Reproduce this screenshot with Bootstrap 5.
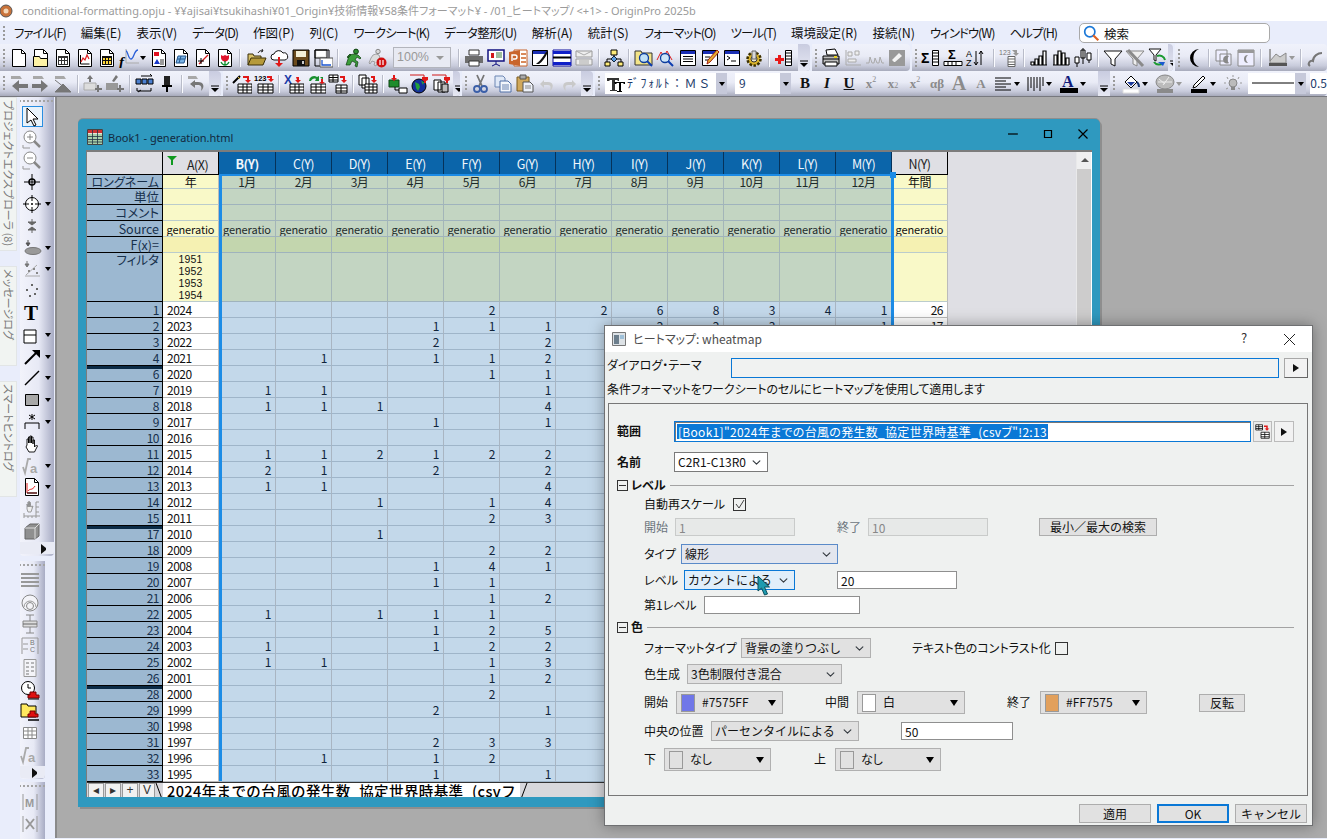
<!DOCTYPE html>
<html lang="ja">
<head>
<meta charset="UTF-8">
<meta name="viewport" content="width=device-width, initial-scale=1">
<title>OriginPro 2025b</title>
<link rel="stylesheet" href="https://cdn.jsdelivr.net/npm/bootstrap@5.3.0/dist/css/bootstrap.min.css">
<style>
html,body{height:100%;overflow:hidden}
body{position:relative;width:1327px;height:839px;background:#e9edfb;font:12px/1.2 "Noto Sans CJK JP","Liberation Sans",sans-serif;font-feature-settings:"palt";color:#111}
svg{display:block;flex:none}
/* title + menu */
.appt{height:21px;background:#fff;color:#9b9b9b;font:11px/21px "Noto Sans","Noto Sans CJK JP",sans-serif;font-feature-settings:"palt";white-space:nowrap}
.appt svg{margin:3px 9px 0 0}
.menub{height:23px;padding-left:2px}
.menub .mi{margin-right:15px;font-size:12.5px;white-space:nowrap}
.menub .mk{letter-spacing:-1px}
.menub .mh{letter-spacing:-.6px}
.gp{width:4px;align-self:stretch;margin:4px 0;background:radial-gradient(circle,#9a9a9a 1px,transparent 1.2px) 0 0/4px 4px repeat-y;flex:none}
.srch{position:absolute;left:1079px;top:23px;width:191px;height:20px;background:#fff;border:1px solid #a9a9a9;border-radius:5px;font-size:12.5px;padding-left:3px}
/* toolbars */
.tbrow{height:27px;gap:2px}
.tbrow2{height:26px;border-bottom:1px solid #77787e}
.tbar{height:100%;padding-left:2px;background:linear-gradient(#f0f2fb 0,#e9ebf6 45%,#c9ccdc 80%,#a7aabb 100%);border-radius:0 4px 4px 0;overflow:hidden;flex:none}
.tb{width:22px;height:20px;flex:none;display:flex;align-items:center;justify-content:center}
.dr{width:8px;height:20px;flex:none;display:flex;align-items:center}
.dr::after{content:"";border:3px solid transparent;border-top:4px solid #000;border-bottom:0}
.dg::after{border-top-color:#999}
.sp{width:8px;height:20px;flex:none;position:relative}
.sp::after{content:"";position:absolute;left:3px;top:1px;bottom:1px;border-left:1px solid #b9bcc9;border-right:1px solid #fafbff}
.x2{width:2px;flex:none}.x3{width:3px;flex:none}.x4{width:4px;flex:none}.x6{width:6px;flex:none}
.hd{width:12px;align-self:stretch;flex:none;background:linear-gradient(#c9cce0,#e6e8f3);display:flex;align-items:flex-end;justify-content:center;padding-bottom:3px;margin-left:auto}
.hd svg{width:8px;height:8px}
.zoomc{width:58px;height:21px;background:#e8eaf3;border:1px solid #b3b5bd;color:#999;font:12.5px/19px "Liberation Sans",sans-serif;padding-left:3px;margin:0 4px 0 2px;flex:none}
.zoomc::after{content:"";float:right;margin:8px 6px 0 0;border:4px solid transparent;border-top:4px solid #999;border-bottom:0}
.fcb{height:21px;background:#fff;flex:none;display:flex;align-items:center;font-size:12px;color:#223a6a;white-space:nowrap}
.fnm{letter-spacing:1.6px;font-feature-settings:normal}
.ddb{width:11px;height:21px;background:#c6c9da;display:flex;align-items:center;justify-content:center;flex:none;margin-left:auto}
.ddb::after{content:"";border:3px solid transparent;border-top:4px solid #000;border-bottom:0}
.ft{width:22px;height:20px;flex:none;display:flex;align-items:center;justify-content:center;font:bold 15px "Liberation Serif",serif;color:#111}
.ft.gy{color:#8b8b8b;font-size:13px}
.ft sup,.ft sub{font-size:8px;font-weight:400}
.tb-w1{width:810px}.tb-w2{width:98px}.tb-w3{width:261px}.tb-w4{flex:1}
.tb-w5{width:221px}.tb-w6{width:237px}.tb-w7{width:131px}.tb-w8{flex:1}
.fc1{width:122px}.fc2{width:56px}.fc3{width:58px}
/* dock */
.dock{width:55px;height:741px;flex:none}
.stabs{width:18px;flex:none}
.stab{width:17px;background:#f1f4f2;border:1px solid #e2e5e6;border-left:0;color:#7a7a7a;font-size:11px;writing-mode:vertical-rl;text-orientation:sideways;white-space:nowrap;padding-top:2px;line-height:15px;overflow:hidden}
.st1{height:154px}.st2{height:100px;margin-top:15px}.st3{height:116px;margin-top:15px}
.vbars{margin-left:2px}
.vbar{background:linear-gradient(90deg,#f2f3fb,#e7e9f5 55%,#a8acc4);border-radius:0 0 4px 4px;overflow:hidden}
.vb1{width:34px;height:459px}.vb2{width:25px;height:218px;margin-top:5px}.vb3{width:25px;height:60px;margin-top:3px}
.vgrip{height:9px;background:radial-gradient(circle,#a4a4a4 1px,transparent 1.2px) 2px 2px/4px 4px repeat-x}
.vi{height:21.8px;display:flex;align-items:center;padding-left:2px}
.vbar .vi svg{width:20px;height:20px}
.vb2 .vi,.vb3 .vi{padding-left:0}
.vi .dr{margin-left:3px;width:8px}
.vsel{width:21px;height:21px;border:1px solid #2a8ee0;background:#e9f3fb}
.vexp{height:12px;display:flex;justify-content:flex-end;padding-right:8px;background:#e9ebf5}
.vexp::after{content:"";border:4px solid transparent;border-left:5px solid #111;border-right:0;margin-top:2px}
/* mdi */
.mdi{width:1272px;height:741px;background:#ababab;border-left:2px solid #8a8a8a;flex:none;position:relative}
.wswin{position:absolute;left:21px;top:22px;width:1022px;height:688px;background:#2f99bf;border-radius:5px 5px 0 0;box-shadow:2px 2px 0 #8e8e8e,0 -1px 0 #8e8e8e}
.wstit{height:31px;padding:5px 8px 0 9px;color:#13293e;font:11px/1 "Noto Sans",sans-serif}
.wstit svg.bk{margin-right:5px}
.wc{position:absolute;top:8px;width:20px;height:14px}
.wc1{left:925px}.wc2{left:960px}.wc3{left:995px}
.wsin{margin:0 8px;width:1006px;height:647px;background:#dfdfe4;border-top:2px solid #7c7c7c;border-left:1px solid #7c7c7c;position:relative;overflow:hidden}
table.sht{border-collapse:separate;border-spacing:0;table-layout:fixed;width:861px;font-size:12px;letter-spacing:-.5px;line-height:13px}
.sht td,.sht th{padding:0 2px;overflow:hidden;white-space:nowrap;font-weight:400;border-right:1px solid #a9b5c2;border-bottom:1px solid #9fb5c9;height:16px}
.sht .c0{width:76px}.sht .c1{width:56px}.sht .c2{width:57px}.sht .cn{width:56px}
.sht thead th{height:23px;text-align:center;background:#0b65aa;color:#f1f6fb;border-right:1px solid #06325a;border-bottom:1px solid #000;font-size:12.5px}
.sht thead th.hg{background:#dfdfe4;color:#222;border-right:1px solid #000}
.sht thead th.hb{font-weight:700}
.sht .rh{background:#9cb8d1;color:#17304c;text-align:right;padding-right:3px;border-right:1px solid #000;border-bottom:1px solid #000;overflow:visible}
.sht .lb{font-size:12.5px;letter-spacing:0}
.sht .aa{background:#fff;border-right:1px solid #bbb;border-bottom:1px solid #bbb;padding-left:4px}
.sht .yy{background:#c3d8ea;text-align:right;padding-right:4px;color:#10243a}
.sht .nn{background:#fff;border-right:1px solid #bbb;border-bottom:1px solid #bbb;text-align:right;padding-right:4px}
.sht .ly{background:#f9f9c8;text-align:center;border-right:1px solid #bbb;border-bottom:1px solid #bcc;padding:0 1px}
.sht .lg{background:#c3d5c2;text-align:center;border-right:1px solid #a3b5b8;border-bottom:1px solid #9fb3bd;color:#1d2a2a;padding:0 1px}
.sht .fy{background:#f5f1b2}.sht .fg{background:#c3d6ae}
.sht .r14 td{height:14px;font-size:12px;line-height:13px;overflow:visible}
.sht .r48 td{height:48px;vertical-align:top}
.sht .ftr{display:block;font:10.5px/12px "Liberation Sans",sans-serif;letter-spacing:.2px}
.sht .hid .rh{box-shadow:inset 0 3px 0 #0a2a45}
.sgen{font-size:11px;letter-spacing:-.1px}
.fnl{gap:10px;margin-left:-6px}
.selv{position:absolute;background:#1c8ce6;z-index:2}
.sv1{left:132px;top:23px;width:3px;height:606px}
.sv2{left:804px;top:23px;width:3px;height:606px}
.sv3{left:132px;top:22px;width:675px;height:2px}
.sv4{left:803px;top:20px;width:6px;height:6px}
.vsb{position:absolute;left:989px;top:0;width:17px;height:100%;background:#cdcccc;border-left:1px solid #e9e9ea;border-right:2px solid #fff}
.vsb i{display:block;height:17px;background:#efeff0;position:relative}
.vsb i::after{content:"";position:absolute;left:4px;top:6px;border:4px solid transparent;border-bottom:4px solid #555;border-top:0}
.tabs{position:absolute;left:0;top:630px;width:989px;height:17px;background:#d8d8dc;border-top:1px solid #333}
.tnav{width:68px;height:16px;gap:1px;flex:none;padding-left:1px}
.tnav span{width:16px;height:15px;background:#f1f1f1;border:1px solid #9a9a9a;font:12px/13px "Liberation Sans",sans-serif;text-align:center;color:#333;flex:none}
.tname{height:16px;background:#fff;font-size:14.5px;font-weight:500;letter-spacing:.4px;line-height:16px;color:#000;white-space:nowrap;padding:0 4px;font-feature-settings:normal}
/* dialog */
.dlg{position:absolute;left:604px;top:325px;width:709px;height:501px;background:#eff1f0;border:1px solid #6f7072;box-shadow:0 0 14px rgba(0,0,0,.35);z-index:5}
.dlgt{height:26px;background:#fff;padding-left:7px;color:#4d4d4d;font-size:12px}
.dlgt svg.di{margin-right:7px}
.dlgt .q{position:absolute;left:636px;top:4px;font-size:13px;color:#333}
.dlgt .cl{position:absolute;left:678px;top:7px}
.thm{margin-top:6px;height:20px;padding-left:2px}
.thm .lbt{width:124px;margin-top:-5px}
.thmi{width:548px;height:20px;background:#f0f2f1;border:1px solid #0a78d6}
.sbtn{width:24px;height:20px;margin-left:5px;background:#f2f2f2;border:1px solid #a8a8a8;border-bottom-color:#666;border-right-color:#666;display:flex;align-items:center;justify-content:center;flex:none}
.sbtn::after{content:"";border:4px solid transparent;border-left:6px solid #111;border-right:0}
.dsc{margin:2px 0 0 2px;height:17px;line-height:17px;letter-spacing:-.12px}
.grp{margin:6px 0 0 3px;width:700px;height:393px;border:1px solid #777;padding:17px 13px 0 8px}
.grp .form-control,.grp .form-select,.fakei{border-radius:0;font-size:12px;line-height:1.2;min-height:0;padding:0 3px;color:#111;box-shadow:none}
.grp .form-control{height:18px;background:#fff;border:1px solid #8f8f8f}
.grp .form-control:disabled{background:#e7e9e8;border-color:#c9cbca;color:#888;opacity:1}
.grp .form-select{height:20px;background-color:#e1e1e1;border:1px solid #b0b0b0;background-size:11px 9px;background-position:right 5px center;padding-right:18px}
.grp .fw{background-color:#fff;border-color:#7a7a7a}
.grp .fsel{background-color:#e3e6ee;border-color:#5a8ac8}
.grp .fhov{background-color:#e0eefa;border-color:#0a78d6}
.fakei{height:21px;background:#fff;border:1px solid #0a78d6;flex:none;width:577px;display:flex;align-items:center;padding-left:2px;box-shadow:inset 1px 1px 0 #777;white-space:nowrap;overflow:hidden}
.hl{background:#0a78d6;color:#fff;padding:0 1px;line-height:15px;letter-spacing:.3px}
.sm19{width:19px;height:21px;margin-left:2px;background:#ececec;border:1px solid #bbb;display:flex;align-items:center;justify-content:center;flex:none}
.sbtn.sm20{width:20px;height:21px;margin-left:2px;border-color:#bbb}
.r{display:flex;align-items:center;flex:none}
.ind{margin-left:27px}
.b7{font-weight:700}
.sect{height:18px;font-weight:700}
.sect .mn{width:11px;height:11px;border:1px solid #333;margin-right:3px;position:relative;flex:none}
.sect .mn::after{content:"";position:absolute;left:1px;right:1px;top:4px;border-top:1px solid #333}
.sect hr{flex:1;margin:0 0 0 4px;border:0;border-top:1px solid #a3a3a3;opacity:1}
.cb13{width:13px;height:13px;border:1px solid #333;background:#eff1f0;flex:none;display:flex}
.btnw{border-radius:0;font-size:12px;line-height:1;padding:0;background:#e1e1e1;border:1px solid #adadad;color:#111;flex:none}
.cd{height:23px;background:#e1e1e1;border:1px solid #b0b0b0;display:flex;align-items:center;padding:0 6px 0 4px;gap:7px;flex:none;font-size:12px}
.cd::after{content:"";margin-left:auto;border:4.5px solid transparent;border-top:6px solid #000;border-bottom:0}
.chip{width:14px;height:18px;border:1px solid #999;flex:none;background:#e1e1e1}
.chip.chip1{background:#7077e8}.chip.chip2{background:#fff}.chip.chip3{background:#e2a05c}
.h18{height:18px}.h20{height:20px}.h21{height:21px}.h23{height:23px}
.m1{margin-top:1px}.m2{margin-top:2px}.m4{margin-top:4px}.m5{margin-top:5px}.m6{margin-top:6px}.m7{margin-top:7px}.m8{margin-top:8px}.m10{margin-top:10px}
.w20{width:20px}.w21{width:21px}.w31{width:31px}.w32{width:32px}.w33{width:33px}.w37{width:37px}.w40{width:40px}.w43{width:43px}.w57{width:57px}.w60{width:60px}.w67{width:67px}.w89{width:89px}.w97{width:97px}.w143{width:143px}
.s94{width:94px}.s157{width:157px}.s111{width:111px}.s130{width:130px}.s155{width:155px}.s148{width:148px}
.i120{width:120px}.i156{width:156px}.i112{width:112px}
.c106{width:106px}.c107{width:107px}.c108{width:108px}
.g41{margin-left:41px}.g42{margin-left:42px}.g43{margin-left:43px}.g51{margin-left:51px}.g52{margin-left:52px}
.b118{width:118px;height:18px}.b46{width:46px;height:18px}
.foot{margin-top:8px;gap:6px;padding-right:5px}
.fb{width:72px;height:19px;border-radius:0;font-size:12px;line-height:1;padding:0;background:#e1e1e1;border:1px solid #adadad;color:#111}
.fb.pri{border:2px solid #0a78d6}
.curs{position:absolute;left:152px;top:249px;z-index:6}
</style>
</head>
<body>
<svg width="0" height="0" class="position-absolute">
<defs>
<symbol id="d" viewBox="0 0 20 20"><path d="M3.5 1.5h9l4 4v13h-13z" fill="#fff" stroke="#000"/><path d="M12.5 1.5v4h4" fill="none" stroke="#000"/></symbol>
<symbol id="new" viewBox="0 0 20 20"><use href="#d"/></symbol>
<symbol id="fold" viewBox="0 0 20 20"><use href="#d"/><path d="M2.5 8.500h6l1 2h7v8h-14z" fill="#fdf2a5" stroke="#000"/></symbol>
<symbol id="wks" viewBox="0 0 20 20"><use href="#d"/><path d="M5 8h10v9H5z" fill="#333"/><path d="M6 10h2v2H6zm3 0h2v2H9zm3 0h2v2h-2zM6 13h2v3H6zm3 0h2v3H9zm3 0h2v3h-2z" fill="#fff"/></symbol>
<symbol id="gph" viewBox="0 0 20 20"><use href="#d"/><path d="M5.500 7v9h9" fill="none" stroke="#000"/><path d="M6 14l2-4 2 2 2-5 2 4" fill="none" stroke="#e02020" stroke-width="1.200"/></symbol>
<symbol id="mtx" viewBox="0 0 20 20"><use href="#d"/><path d="M5 8h10v9H5z" fill="#111"/><path d="M6 10h2v2H6zm3 0h2v2H9zm3 0h2v2h-2zM6 13h2v3H6zm3 0h2v3H9zm3 0h2v3h-2z" fill="#ffd83a"/></symbol>
<symbol id="fx" viewBox="0 0 20 20"><path d="M7 15V1M7 15h13" fill="none" stroke="#aaa"/><path d="M7 3c2 0 2 8 5 8s3-9 7-9" fill="none" stroke="#2a5fd8" stroke-width="1.300"/><text x="0" y="19" font-family="Liberation Serif" font-style="italic" font-weight="700" font-size="15">f</text></symbol>
<symbol id="rep" viewBox="0 0 20 20"><use href="#d"/><path d="M5 4h5v4H5z" fill="#e01020"/><path d="M5 16l3-5 3 5z" fill="#1636c8"/><path d="M11 12h4M11 14h4M11 16h4" stroke="#333"/></symbol>
<symbol id="nte" viewBox="0 0 20 20"><use href="#d"/><path d="M7 8h8l-2 7H5z" fill="#79b3e6" stroke="#25568c"/><path d="M6 11h8M10 8l-2 7" stroke="#25568c"/></symbol>
<symbol id="lay" viewBox="0 0 20 20"><use href="#d"/><path d="M6 16L15 7" stroke="#d01818" stroke-width="1.300"/><path d="M8 10v6M5 13h6" stroke="#000"/></symbol>
<symbol id="tul" viewBox="0 0 20 20"><use href="#d"/><path d="M6 7l2 1 2-1 2 1 2-1v3c0 2-2 3-4 4-2-1-4-2-4-4z" fill="#e0142c"/><path d="M10 13v4M6 14c1 2 2 3 4 3 2 0 3-1 4-3" fill="none" stroke="#109030" stroke-width="1.300"/></symbol>
<symbol id="open" viewBox="0 0 20 20"><path d="M1 17V6h5l1 2h7v2" fill="#d8c168" stroke="#3a2f08"/><path d="M1 17l3-7h15l-3 7z" fill="#b69a3a" stroke="#3a2f08"/><path d="M11 5c1-2 3-3 5-2l-1-2m1 2l-2 1" fill="none" stroke="#222"/></symbol>
<symbol id="cld" viewBox="0 0 20 20"><path d="M5 12a3 3 0 010-6 5 5 0 019-1 3.500 3.500 0 012 7z" fill="#fff" stroke="#111"/><path d="M9 9h2v6h3l-4 4-4-4h3z" fill="#e01818"/></symbol>
<symbol id="sav" viewBox="0 0 20 20"><path d="M2 2h16v16H2z" fill="#6b4a1c" stroke="#000"/><path d="M5 3h10v6H5z" fill="#f4efd6"/><path d="M6 12h8v6H6z" fill="#111"/><path d="M11 13h2v3h-2z" fill="#ccc"/></symbol>
<symbol id="sva" viewBox="0 0 20 20"><path d="M2 2h12v8H2z" fill="#eee" stroke="#000"/><path d="M2 2h14v16H2z" fill="none" stroke="#000"/><path d="M4 3h8v5H4z" fill="#fff"/><path d="M7 10h13v9H7z" fill="#fff" stroke="#555"/><path d="M9 12v5h9" fill="none" stroke="#1b55d0" stroke-width="1.300"/></symbol>
<symbol id="run" viewBox="0 0 20 20"><circle cx="13" cy="3.500" r="2.400" fill="#2f8f30" stroke="#103f10"/><path d="M11 6l4 1 3 3-1 1-3-2-2 3 3 2-1 5-2-1 1-3-4-2-2 4H3l2-6 1-4zM4 9l3-3 1 1-3 3z" fill="#3b9d3a" stroke="#103f10" stroke-width=".7"/></symbol>
<symbol id="stp" viewBox="0 0 20 20"><circle cx="11" cy="3.500" r="2.200" fill="#d8d8d8" stroke="#888"/><path d="M9 6l3 1 1 3-3 2 1 2-2 4-2-1 1-3-3-1-2 3-1-1 2-5 2-3z" fill="#ddd" stroke="#888" stroke-width=".7"/><circle cx="14.500" cy="14.500" r="5" fill="#d01010"/><path d="M13 12v5M16 12v5" stroke="#fff" stroke-width="1.200"/></symbol>
<symbol id="prng" viewBox="0 0 20 20"><path d="M5 2h10v5H5z" fill="#fff" stroke="#333"/><path d="M1 8h18v7H1z" fill="#6d6d6d"/><path d="M5 13h10v5H5z" fill="#fff" stroke="#333"/></symbol>
<symbol id="sld" viewBox="0 0 20 20"><path d="M2 2h16v11H2z" fill="#fff" stroke="#101080" stroke-width="1.500"/><path d="M5 5h3v5H5z" fill="#d01818"/><path d="M10 5h6M10 7h6M10 9h6" stroke="#3a7a3a"/><path d="M10 13v3M6 18l4-2 4 2" fill="none" stroke="#101080"/></symbol>
<symbol id="ppt" viewBox="0 0 20 20"><path d="M6 2h13v16H6z" fill="#fff" stroke="#c7622a"/><path d="M1 4l11-2v16L1 16z" fill="#c9652c"/><path d="M13 5h5v2h-5zm0 4h5v2h-5zm0 4h5v2h-5z" fill="#d98a5c"/><path d="M4 13V7h3a2 2 0 010 4H5" fill="none" stroke="#fff" stroke-width="1.400"/></symbol>
<symbol id="pen" viewBox="0 0 20 20"><path d="M2.500 2.500h15v15h-15z" fill="#fff" stroke="#000"/><path d="M3 3h14v3H3z" fill="#1b2fb4"/><path d="M6 16c3-2 7-7 10-12l2-2-1 4c-2 4-5 8-8 10z" fill="#111"/></symbol>
<symbol id="bars" viewBox="0 0 20 20"><path d="M1 2h18v16H1z" fill="#fff" stroke="#0c0c9c"/><path d="M1 3h18v3H1zm0 11h18v3H1z" fill="#1020c8"/><path d="M1 9.500h18" stroke="#000" stroke-width="2"/></symbol>
<symbol id="env" viewBox="0 0 20 20"><path d="M2 3h16v6H2zM2 11h16v6H2z" fill="#eee" stroke="#999"/><path d="M2 3l8 4 8-4M5 13h10M5 15h10" fill="none" stroke="#aaa"/></symbol>
<symbol id="tree" viewBox="0 0 20 20"><path d="M10 7v4M3 14v-3h14v3" fill="none" stroke="#000"/><path d="M7 2h6v5H7zM1 14h5v4H1zM14 14h5v4h-5z" fill="#ffec7a" stroke="#000"/><path d="M10 8l3 3-3 3-3-3z" fill="#5a9be0" stroke="#123"/></symbol>
<symbol id="qfl" viewBox="0 0 20 20"><path d="M1 15V3h6l1 2h10v12H1z" fill="#f3e489" stroke="#333"/><circle cx="10" cy="10" r="4.500" fill="#bfe0f7" stroke="#0c3c9c" stroke-width="1.300"/><path d="M13 13l5 5" stroke="#0c3cb0" stroke-width="2"/></symbol>
<symbol id="qgr" viewBox="0 0 20 20"><path d="M1 12l4-8 3 5 3-6 5 9" fill="none" stroke="#e02020"/><circle cx="9" cy="10" r="4.500" fill="#cfe6f8" stroke="#0c3c9c" stroke-width="1.300"/><path d="M12 13l5 5" stroke="#0c3cb0" stroke-width="2"/></symbol>
<symbol id="tbl" viewBox="0 0 20 20"><path d="M2.500 2.500h15v15h-15z" fill="#fff" stroke="#000"/><path d="M3 3h14v3H3z" fill="#1b2fb4"/><path d="M5 8.500h10M5 11h10M5 13.500h10" stroke="#000"/></symbol>
<symbol id="edt" viewBox="0 0 20 20"><path d="M2.500 2.500h15v15h-15z" fill="#fff" stroke="#000"/><path d="M3 3h14v3H3z" fill="#1b2fb4"/><path d="M5 9h5M5 12h4" stroke="#000"/><path d="M7 16l1-4 9-10 2 2-9 10z" fill="#e8b030" stroke="#a02010"/></symbol>
<symbol id="cmd" viewBox="0 0 20 20"><path d="M2.500 2.500h15v15h-15z" fill="#fff" stroke="#000"/><path d="M3 3h14v3H3z" fill="#1b2fb4"/><path d="M5 8l3 2-3 2M9 13h5" fill="none" stroke="#000"/></symbol>
<symbol id="gear" viewBox="0 0 20 20"><circle cx="10" cy="11" r="6.500" fill="#d9b32c" stroke="#3c3000" stroke-width="2.500" stroke-dasharray="2.500 1.500"/><circle cx="10" cy="11" r="3" fill="#efe9cf" stroke="#333"/><path d="M8 3h4v8H8z" fill="#d9d9d9" stroke="#666"/></symbol>
<symbol id="plus" viewBox="0 0 20 20"><path d="M11.500 2.500h6v15h-6z" fill="#fff" stroke="#000"/><path d="M12 5h5M12 8h5M12 11h5M12 14h5" stroke="#000"/><path d="M4 7h3v3h3v3H7v3H4v-3H1v-3h3z" fill="#e81818"/></symbol>
<symbol id="prt" viewBox="0 0 20 20"><path d="M5 2l9-1 3 6H6z" fill="#fff" stroke="#000"/><path d="M2 8h16v8H2z" fill="#bdbdbd" stroke="#000"/><path d="M2 11h16" stroke="#000"/><path d="M4 14h12v4H4z" fill="#fff" stroke="#000"/><path d="M13 9h3" stroke="#e8d020" stroke-width="2"/></symbol>
<symbol id="cols" viewBox="0 0 20 20"><path d="M3 2v15h15" fill="none" stroke="#aaa"/><path d="M5 4h4v4H5zM12 3h4v4h-4zM5 11h8v3H5z" fill="#eee" stroke="#aaa"/></symbol>
<symbol id="pks" viewBox="0 0 20 20"><path d="M1 15h3l1-6 2 6h2l1-5 2 5h2l1-6 2 6h2" fill="none" stroke="#aaa"/></symbol>
<symbol id="ers" viewBox="0 0 20 20"><path d="M2 2h16v16H2z" fill="#999"/><path d="M7 14l-2-2 7-7 3 3-7 6z" fill="#f4f4f4"/></symbol>
<symbol id="sgl" viewBox="0 0 20 20"><text x="0" y="15" font-family="Liberation Sans" font-weight="700" font-size="14">Σ</text><path d="M11.500 2.500h6v15h-6z" fill="#fff" stroke="#000"/><path d="M12 5h5M12 8h5M12 11h5M12 14h5" stroke="#000"/></symbol>
<symbol id="sum" viewBox="0 0 20 20"><text x="5" y="11" font-family="Liberation Sans" font-weight="700" font-size="13">Σ</text><path d="M1 13.500h18v4H1z" fill="#fff" stroke="#000"/><path d="M5 13v4M9 13v4M13 13v4" stroke="#000"/></symbol>
<symbol id="srt" viewBox="0 0 20 20"><text x="1" y="9" font-family="Liberation Sans" font-size="9">A</text><text x="1" y="18" font-family="Liberation Sans" font-size="9">Z</text><path d="M11 3v14m-2-3l2 3 2-3M16 17V3m-2 3l2-3 2 3" fill="none" stroke="#000"/></symbol>
<symbol id="n12" viewBox="0 0 20 20"><text x="0" y="7" font-family="Liberation Sans" font-size="7" fill="#777">123</text><path d="M9 8.500h7v10H9z" fill="#fff" stroke="#666"/><path d="M9 11h7M9 14h7M9 16.500h7" stroke="#666"/><path d="M13 2h5v3h2l-3 3-3-3h2" fill="#999"/></symbol>
<symbol id="b1" viewBox="0 0 20 20"><path d="M2 17h16M2 17v-3h3v3M6 17v-6h3v6M10 17V8h3v9M14 17V3h3v14" fill="#fff" stroke="#000" stroke-width="1.200"/></symbol>
<symbol id="b2" viewBox="0 0 20 20"><path d="M2 17h16M3 17V7h3v10M7 17V3h3v14M11 17V5h3v12M15 17v-7h3v7" fill="#fff" stroke="#000" stroke-width="1.200"/></symbol>
<symbol id="b3" viewBox="0 0 20 20"><path d="M2 9h4v6H2zM8 2h4v8H8zM14 5h4v7h-4z" fill="#fff" stroke="#000"/><path d="M4 15v4M10 0v16M16 12v3" stroke="#000"/></symbol>
<symbol id="flt" viewBox="0 0 20 20"><path d="M1 3h18l-7 8v7l-4-2v-5z" fill="#fff" stroke="#111"/></symbol>
<symbol id="fltx" viewBox="0 0 20 20"><path d="M1 3h18l-7 8v7l-4-2v-5z" fill="#eee" stroke="#888"/><path d="M3 2l15 16" stroke="#8a8a8a" stroke-width="3"/></symbol>
<symbol id="flr" viewBox="0 0 20 20"><path d="M2 1h12l-5 6v6l-2-1V7z" fill="#fff" stroke="#111"/><path d="M7 14a6 6 0 009 1m2-3a6 6 0 00-8-4" fill="none" stroke="#1a9a30" stroke-width="2"/><path d="M11 14l5 4 2-4z" fill="#1a5ad0"/></symbol>
<symbol id="moon" viewBox="0 0 20 20"><path d="M15 1a9 9 0 100 18 10 10 0 010-18z" fill="#000"/></symbol>
<symbol id="cm1" viewBox="0 0 20 20"><path d="M2 2h11v11H2zM6 6h11v11H6z" fill="#eef" stroke="#888"/><path d="M15 8a4 4 0 100 7 5 5 0 010-7z" fill="#888"/></symbol>
<symbol id="cm2" viewBox="0 0 20 20"><path d="M2 2h16v16H2z" fill="#eef" stroke="#888"/><path d="M2 2h16v3H2z" fill="#999"/><path d="M12 7a4 4 0 100 8 5 5 0 010-8z" fill="#888"/></symbol>
<symbol id="hil" viewBox="0 0 20 20"><path d="M2 1v14h16V5L12 9 8 6l-6 7z" fill="#ccc" stroke="#888"/><path d="M1 15h18v3H1z" fill="#555"/></symbol>
<symbol id="lst" viewBox="0 0 20 20"><path d="M4 18c-3-2 0-6 3-5 0-5 5-8 9-8" fill="none" stroke="#777" stroke-width="2"/></symbol>
<symbol id="bk" viewBox="0 0 20 20"><path d="M2 2h9l2 3H2z" fill="#a8a8a8"/><path d="M10 6L3 12l7 6v-4h9v-4h-9z" fill="#777"/></symbol>
<symbol id="fw" viewBox="0 0 20 20"><path d="M2 2h9l2 3H2z" fill="#a8a8a8"/><path d="M10 6l7 6-7 6v-4H1v-4h9z" fill="#777"/></symbol>
<symbol id="up" viewBox="0 0 20 20"><path d="M2 2h9l2 3H2z" fill="#a8a8a8"/><path d="M2 6l15 12M10 10l8 8H2z" fill="#777" stroke="#777"/></symbol>
<symbol id="fa" viewBox="0 0 20 20"><path d="M7 1l3 4H8v3H6V5H4z" fill="#777"/><path d="M1 9h12v7H1z" fill="#ddd" stroke="#aaa"/><path d="M15 11v7M12 15h7" stroke="#777" stroke-width="2"/></symbol>
<symbol id="fb" viewBox="0 0 20 20"><path d="M11 1L7 7l2 1 4-5z" fill="#777"/><path d="M1 9h12v7H1z" fill="#999"/><path d="M15 11v7M12 15h7" stroke="#777" stroke-width="2"/></symbol>
<symbol id="lnk" viewBox="0 0 20 20"><path d="M1 5h5v5H1zM7 5h5v5H7zM13 5h5v5h-5z" fill="#4b7fd0" stroke="#000"/><path d="M2 14v3h14v-3M6 2h11l-2-2m-9 16l-3 2" fill="none" stroke="#000"/></symbol>
<symbol id="pin" viewBox="0 0 20 20"><path d="M7 2h6v10H7z" fill="#222"/><path d="M5 12h10" stroke="#000" stroke-width="2"/><path d="M10 12v6" stroke="#000" stroke-width="2"/></symbol>
<symbol id="und" viewBox="0 0 20 20"><path d="M1 2h8l2 3H1z" fill="#a8a8a8"/><path d="M8 6L3 10l5 4v-3h3c3 0 4 2 3 6 4-4 3-9-3-9H8z" fill="#777"/></symbol>
<symbol id="wnd" viewBox="0 0 20 20"><path d="M1 9l7-7" stroke="#000" stroke-width="2"/><path d="M6 3l2 2" stroke="#e8c030"/><path d="M6 10h14v9H6z" fill="#fff" stroke="#000"/><path d="M6 13h14M6 16h14M11 10v9M15 10v9" stroke="#000"/><path d="M11 2h6v4h2l-3 3-3-3h2V4h-4z" fill="#e01818"/></symbol>
<symbol id="n1t" viewBox="0 0 20 20"><text x="0" y="7" font-family="Liberation Sans" font-weight="700" font-size="7.500">123</text><path d="M4 10h15v9H4z" fill="#fff" stroke="#000"/><path d="M4 13h15M4 16h15M9 10v9M14 10v9" stroke="#000"/><path d="M13 2h5v3h2l-3 3-3-3h2V4h-3z" fill="#e01818"/></symbol>
<symbol id="xls" viewBox="0 0 20 20"><text x="0" y="10" font-family="Liberation Sans" font-weight="700" font-size="12" fill="#1b3aa8">X</text><path d="M6 10h14v9H6z" fill="#fff" stroke="#000"/><path d="M6 13h14M6 16h14M11 10v9M15 10v9" stroke="#000"/><path d="M12 3h3v3h2l-3 3-3-3h2z" fill="#e01818"/></symbol>
<symbol id="rec" viewBox="0 0 20 20"><path d="M3 7a5 5 0 018-4l2-1v5H9l1-2c-2-1-4 0-5 2zM14 3h3v3" fill="#1a9030"/><path d="M5 10h15v9H5z" fill="#fff" stroke="#000"/><path d="M5 13h15M5 16h15M10 10v9M15 10v9" stroke="#000"/><path d="M15 5h2v3h2l-3 2-3-2h2z" fill="#e01818"/></symbol>
<symbol id="imt" viewBox="0 0 20 20"><path d="M1 1h9v7H1z" fill="#fff" stroke="#000"/><path d="M1 3.500h9M1 6h9M5 1v7" stroke="#000"/><path d="M8 11h11v8H8z" fill="#fff" stroke="#000"/><path d="M8 14h11M8 17h11M13 11v8" stroke="#000"/><path d="M12 2h5v4h2l-3 3-3-3h2V4h-3z" fill="#e01818"/></symbol>
<symbol id="cpy" viewBox="0 0 20 20"><path d="M1 1h7v10H1zM4 4h7v10H4z" fill="#fff" stroke="#000"/><path d="M7 10h12v9H7z" fill="#fff" stroke="#000"/><path d="M7 13h12M7 16h12M11 10v9M15 10v9" stroke="#000"/><path d="M13 2h4v4h2l-3 3-3-3h2V4h-2z" fill="#e01818"/></symbol>
<symbol id="plg" viewBox="0 0 20 20"><path d="M1 6h10v7H1z" fill="#1e8c2c" stroke="#0c4010"/><path d="M5 1h2v3h2L6 7 3 4h2z" fill="#e01818"/><path d="M11 14h8v5h-8z" fill="#fff" stroke="#000"/><path d="M7 13v3h4" fill="none" stroke="#000"/></symbol>
<symbol id="glb" viewBox="0 0 20 20"><circle cx="9" cy="12" r="7" fill="#15309c" stroke="#000"/><path d="M5 8l4 2 1 3-2 4-2-3zM11 7l3 1-1 3z" fill="#24a03a"/><path d="M0 1h14v3" fill="none" stroke="#d01818"/><path d="M12 3h6v3l-2 1v2h-2V7l-2-1z" fill="#e01818"/></symbol>
<symbol id="cpg" viewBox="0 0 20 20"><path d="M2 6h7v10H2zM6 8h7v10H6z" fill="#fff" stroke="#000"/><path d="M10 10h6v8h-6z" fill="#bbb" stroke="#000"/><path d="M0 1h14v3" fill="none" stroke="#d01818"/><path d="M12 3h6v3l-2 1v2h-2V7l-2-1z" fill="#e01818"/></symbol>
<symbol id="cut" viewBox="0 0 20 20"><path d="M6 1l5 11M13 1L8 12" stroke="#777" stroke-width="1.800"/><circle cx="6" cy="15" r="3" fill="none" stroke="#3b5fa8" stroke-width="1.800"/><circle cx="13" cy="15" r="3" fill="none" stroke="#3b5fa8" stroke-width="1.800"/></symbol>
<symbol id="cop" viewBox="0 0 20 20"><path d="M2 2h8l2 2v9H2z" fill="#dfe8f7" stroke="#6d86b3"/><path d="M7 7h8l3 3v8H7z" fill="#f3f6fc" stroke="#4e6fa5"/><path d="M9 11h7M9 13h7M9 15h7" stroke="#6d86b3"/></symbol>
<symbol id="pst" viewBox="0 0 20 20"><path d="M2 3h12v14H2z" fill="#d1a95c" stroke="#7a5a1e"/><path d="M5 1h6v4H5z" fill="#aaa" stroke="#555"/><path d="M8 8h7l3 3v7H8z" fill="#eef2fa" stroke="#555"/><path d="M10 12h6M10 14h6" stroke="#888"/></symbol>
<symbol id="ug" viewBox="0 0 20 20"><path d="M7 6L3 10l4 4v-3h4c3 0 3 3 2 6 4-3 4-9-2-9H7z" fill="#c9c9c9"/></symbol>
<symbol id="rg" viewBox="0 0 20 20"><path d="M13 6l4 4-4 4v-3H9c-3 0-3 3-2 6-4-3-4-9 2-9h4z" fill="#c9c9c9"/></symbol>
<symbol id="tt" viewBox="0 0 20 20"><path d="M1 4h12v3h-1l-1-1H9v10h2v1H4v-1h2V6H4L3 7H1z" fill="#333"/><path d="M8 8h11v2h-1l-1-1h-2v8h1v1h-5v-1h2V9h-2l-1 1H9z" fill="#000"/></symbol>
<symbol id="alg" viewBox="0 0 20 20"><path d="M2 4h16M2 7h11M2 10h16M2 13h11M2 16h16" stroke="#000"/></symbol>
<symbol id="bar4" viewBox="0 0 20 20"><path d="M3 3v14M6 3v11M9 3v14M12 3v11M15 3v14M18 3v9" stroke="#000"/></symbol>
<symbol id="acl" viewBox="0 0 20 20"><text x="3" y="13" font-family="Liberation Serif" font-weight="700" font-size="16" fill="#101c7c">A</text><path d="M1 14h18v5H1z" fill="#000"/></symbol>
<symbol id="fil" viewBox="0 0 20 20"><path d="M4 8l6-6 6 6-6 6z" fill="#fff" stroke="#000"/><path d="M6 8h8l-4 4z" fill="#1c3a9c"/><path d="M16 8c2 2 2 4 2 5" stroke="#12306e" stroke-width="2"/><path d="M2 15h16v4H2z" fill="#fff" stroke="#ddd"/></symbol>
<symbol id="pal" viewBox="0 0 20 20"><ellipse cx="10" cy="8" rx="9" ry="7" fill="#bbb" stroke="#888"/><path d="M4 5l6 5M14 3l-6 8M3 8h14" stroke="#eee"/><path d="M2 15h16v4H2z" fill="#8a8a8a"/></symbol>
<symbol id="pn2" viewBox="0 0 20 20"><path d="M5 11L14 2l2 2-9 9-3 1z" fill="#fff" stroke="#000"/><path d="M2 15h16v4H2z" fill="#000"/></symbol>
<symbol id="blb" viewBox="0 0 20 20"><circle cx="10" cy="9" r="4" fill="#bbb" stroke="#888"/><path d="M8 13h4v3H8z" fill="#888"/><path d="M10 1v2M3 9H1M19 9h-2M4 3l1 2M16 3l-1 2M3 15l2-1M17 15l-2-1" stroke="#999"/></symbol>
<symbol id="ptr" viewBox="0 0 20 20"><path d="M4 1v15l4-3 3 6 2-1-3-6h5z" fill="#fff" stroke="#000"/></symbol>
<symbol id="zin" viewBox="0 0 20 20"><circle cx="8" cy="8" r="6" fill="#fff" stroke="#888"/><path d="M5 8h6M8 5v6" stroke="#888"/><path d="M12 12l6 6" stroke="#888" stroke-width="2.500"/><path d="M1 16v3h7" fill="none" stroke="#999"/></symbol>
<symbol id="zou" viewBox="0 0 20 20"><circle cx="8" cy="8" r="6" fill="#fff" stroke="#888"/><path d="M5 8h6" stroke="#888"/><path d="M12 12l6 6" stroke="#888" stroke-width="2.500"/><path d="M1 16v3h7" fill="none" stroke="#999"/></symbol>
<symbol id="crs" viewBox="0 0 20 20"><path d="M10 2v16M2 10h16" stroke="#000"/><circle cx="10" cy="10" r="3" fill="none" stroke="#000" stroke-width="1.500"/></symbol>
<symbol id="tgt" viewBox="0 0 20 20"><circle cx="10" cy="10" r="6.500" fill="#fff" stroke="#000"/><path d="M10 1v6M10 13v6M1 10h6M13 10h6" stroke="#000"/><circle cx="10" cy="10" r="1" fill="#000"/></symbol>
<symbol id="mv1" viewBox="0 0 20 20"><path d="M10 3v3M10 14v3M6 6h8l-4 3zM6 14h8l-4-3z" fill="#666" stroke="#666"/></symbol>
<symbol id="ell" viewBox="0 0 20 20"><path d="M6 2v4M4 5h4L6 8z" fill="#555" stroke="#555"/><ellipse cx="11" cy="13" rx="8" ry="3.500" fill="#999" stroke="#777"/></symbol>
<symbol id="sct" viewBox="0 0 20 20"><path d="M5 2v4M3 5h4L5 8z" fill="#777" stroke="#777"/><path d="M3 17h15M4 16l11-10" stroke="#aaa"/><path d="M6 11h2v2H6zM11 9h2v2h-2zM14 13h2v2h-2z" fill="#888"/></symbol>
<symbol id="dts" viewBox="0 0 20 20"><path d="M9 3h2v2H9zM14 7h2v2h-2zM4 8h2v2H4zM12 12h2v2h-2zM7 14h2v2H7z" fill="#666"/></symbol>
<symbol id="bgt" viewBox="0 0 20 20"><text x="2" y="17" font-family="Liberation Serif" font-weight="700" font-size="21">T</text></symbol>
<symbol id="ano" viewBox="0 0 20 20"><path d="M2 5h12v13H2z" fill="#fff" stroke="#000"/><path d="M2 10h12" stroke="#000"/></symbol>
<symbol id="arw" viewBox="0 0 20 20"><path d="M3 17L15 5" stroke="#000" stroke-width="2"/><path d="M10 3h8v8z" fill="#000"/></symbol>
<symbol id="lin" viewBox="0 0 20 20"><path d="M3 17L17 3" stroke="#000" stroke-width="1.500"/></symbol>
<symbol id="rct" viewBox="0 0 20 20"><path d="M3.500 4.500h13v11h-13z" fill="#a8a8a8" stroke="#000"/></symbol>
<symbol id="str" viewBox="0 0 20 20"><path d="M10 2v6M7 3l6 4M13 3L7 7" stroke="#000"/><path d="M3 17v-6h14v6" fill="none" stroke="#000"/></symbol>
<symbol id="hnd" viewBox="0 0 20 20"><path d="M5 11V5h1.500v4-6H8v6V2h1.500v7-6H11v7-4h1.500v7l2-2 1 1-3 6H7l-3-5z" fill="#fff" stroke="#000" stroke-width=".9"/></symbol>
<symbol id="sqr" viewBox="0 0 20 20"><path d="M1 11l2 6 3-14h3" fill="none" stroke="#aaa" stroke-width="1.800"/><text x="8" y="17" font-family="Liberation Sans" font-weight="700" font-size="13" fill="#a8a8a8">a</text></symbol>
<symbol id="gpc" viewBox="0 0 20 20"><use href="#d"/><path d="M5 6v10h10M6 14c2-3 4 0 7-5" fill="none" stroke="#e02020"/><path d="M5 16h10" stroke="#000"/></symbol>
<symbol id="hng" viewBox="0 0 20 20"><path d="M5 10V5l1 3V3l1 5V2l1 6V3l1 5 2-1-2 6H6z" fill="#eee" stroke="#888" stroke-width=".8"/><path d="M2 17h16M14 3v16M2 14v5M6 17v2M10 17v2M14 3h3M14 8h3M14 13h3" stroke="#999"/></symbol>
<symbol id="bx3" viewBox="0 0 20 20"><path d="M3 7l5-4h9v12l-4 3H3z" fill="#8f8f8f" stroke="#666"/><path d="M3 7h10v11M13 7l4-4" fill="none" stroke="#ddd"/></symbol>
<symbol id="lns" viewBox="0 0 20 20"><path d="M1 3h18M1 7h18M1 11h18M1 15h18" stroke="#999" stroke-width="2"/></symbol>
<symbol id="rng" viewBox="0 0 20 20"><circle cx="10" cy="10" r="8" fill="#f4f4f8" stroke="#888"/><circle cx="10" cy="13" r="3.500" fill="none" stroke="#888"/><path d="M4 14a6 6 0 0112 0" fill="none" stroke="#999"/></symbol>
<symbol id="bxp" viewBox="0 0 20 20"><path d="M10 1v18M6 1h8M6 19h8" stroke="#888"/><path d="M3 7h14v6H3z" fill="#ddd" stroke="#888"/><path d="M3 10h14" stroke="#666"/></symbol>
<symbol id="bc" viewBox="0 0 20 20"><path d="M2 2v16M18 2v16M2 2h16" fill="none" stroke="#999"/><text x="10" y="9" font-family="Liberation Sans" font-size="7" fill="#777">B</text><text x="10" y="16" font-family="Liberation Sans" font-size="7" fill="#777">C</text><path d="M3 8h5M3 13h5" stroke="#999"/></symbol>
<symbol id="rl" viewBox="0 0 20 20"><path d="M4 1.500h12v17H4z" fill="#f4f4f8" stroke="#999"/><path d="M6 5h3M11 5h3M6 9h3M11 9h3M6 13h3M11 13h3M6 16h3" stroke="#777"/></symbol>
<symbol id="clk" viewBox="0 0 20 20"><circle cx="8" cy="8" r="6.500" fill="#fff" stroke="#000"/><path d="M8 4v4h3" fill="none" stroke="#000"/><path d="M10 12h6v3h3v3H8v-3h2z" fill="#e01010" stroke="#700"/><path d="M8 19h11" stroke="#000"/></symbol>
<symbol id="ffd" viewBox="0 0 20 20"><path d="M1 2h6l1 2h8v11H1z" fill="#ffe95e" stroke="#000"/><path d="M10 9h5v3h3v3H8v-3h2z" fill="#e01010" stroke="#700"/><path d="M8 18h11" stroke="#000" stroke-width="1.500"/></symbol>
<symbol id="grd" viewBox="0 0 20 20"><path d="M3.500 4.500h13v11h-13z" fill="#fff" stroke="#888"/><path d="M4 8h12M4 12h12M8 5v10M12 5v10" stroke="#888"/></symbol>
<symbol id="mm" viewBox="0 0 20 20"><path d="M3 2v16M17 2v16" stroke="#999"/><text x="5" y="15" font-family="Liberation Sans" font-size="11" font-weight="700" fill="#999">M</text></symbol>
<symbol id="xx" viewBox="0 0 20 20"><path d="M3 2v16M17 2v16" stroke="#999"/><path d="M6 5l8 10M14 5L6 15" stroke="#999" stroke-width="2"/></symbol>
<symbol id="chv" viewBox="0 0 8 8"><path d="M0 1h8" stroke="#000"/><path d="M0 3h8L4 7z" fill="#000"/></symbol>
</defs>
</svg>

<div class="appt d-flex">
  <svg width="13" height="15" viewBox="0 0 13 15"><circle cx="6" cy="8" r="6" fill="#c9733a" stroke="#555"/><circle cx="6" cy="8" r="2.500" fill="#f3d7b8"/></svg>
  <span>conditional-formatting.opju - ¥¥ajisai¥tsukihashi¥01_Origin¥技術情報¥58条件フォーマット¥ - /01_ヒートマップ/ &lt;+1&gt; - OriginPro 2025b</span>
</div>

<div class="menub d-flex align-items-center">
  <span class="gp"></span><span class="x6"></span><span class="x2"></span>
  <span class="mi mk">ファイル(F)</span><span class="mi">編集(E)</span><span class="mi">表示(V)</span><span class="mi mk">データ(D)</span><span class="mi">作図(P)</span><span class="mi">列(C)</span><span class="mi mk">ワークシート(K)</span><span class="mi mh">データ整形(U)</span><span class="mi">解析(A)</span><span class="mi">統計(S)</span><span class="mi mk">フォーマット(O)</span><span class="mi mk">ツール(T)</span><span class="mi">環境設定(R)</span><span class="mi">接続(N)</span><span class="mi mk">ウィンドウ(W)</span><span class="mi mk">ヘルプ(H)</span>
</div>
<div class="srch d-flex align-items-center gap-1">
  <svg width="17" height="17" viewBox="0 0 20 20"><circle cx="8" cy="8" r="6" fill="#fff" stroke="#1b78d8" stroke-width="2"/><path d="M12 12l6 6" stroke="#e06020" stroke-width="2.500"/></svg>検索
</div>

<div class="tbrow d-flex">
  <div class="tbar d-flex align-items-center tb-w1"><span class="gp"></span><span class="x2"></span><span class="d-flex" data-i="new fold wks gph mtx fx dr rep nte lay tul sp x2 open cld sav sva sp run x2 stp"></span><span class="x3"></span><span class="zoomc">100%</span><span class="d-flex" data-i="sp prng sld ppt pen bars env sp tree sp qfl qgr tbl edt cmd gear sp plus"></span><span class="hd"><svg><use href="#chv"/></svg></span></div>
  <div class="tbar d-flex align-items-center tb-w2"><span class="gp"></span><span class="x2"></span><span class="d-flex" data-i="prt cols pks ers"></span></div>
  <div class="tbar d-flex align-items-center tb-w3"><span class="gp"></span><span class="x2"></span><span class="d-flex" data-i="sgl sum srt x4 sp n12 sp b1 b2 b3 sp flt fltx flr"></span><span class="hd"><svg><use href="#chv"/></svg></span></div>
  <div class="tbar d-flex align-items-center tb-w4"><span class="gp"></span><span class="x2"></span><span class="d-flex" data-i="moon sp cm1 cm2 sp x2 hil dg sp lst"></span></div>
</div>
<div class="tbrow tbrow2 d-flex">
  <div class="tbar d-flex align-items-center tb-w5"><span class="gp"></span><span class="x2"></span><span class="d-flex" data-i="bk fw up sp fa fb sp lnk pin sp und"></span><span class="hd"><svg><use href="#chv"/></svg></span></div>
  <div class="tbar d-flex align-items-center tb-w6"><span class="gp"></span><span class="x2"></span><span class="d-flex" data-i="wnd n1t sp xls rec imt sp cpy sp plg glb cpg"></span><span class="hd"><svg><use href="#chv"/></svg></span></div>
  <div class="tbar d-flex align-items-center tb-w7"><span class="gp"></span><span class="x2"></span><span class="d-flex" data-i="cut cop pst ug rg"></span><span class="hd"><svg><use href="#chv"/></svg></span></div>
  <div class="tbar d-flex align-items-center tb-w8">
    <span class="gp"></span><span class="x4"></span>
    <div class="fcb fc1"><span class="tb"><svg width="20" height="20"><use href="#tt"/></svg></span><span class="fnm">ﾃﾞﾌｫﾙﾄ：ＭＳ</span><span class="ddb"></span></div>
    <span class="x6"></span><span class="x2"></span>
    <div class="fcb fc2 ps-1">9<span class="ddb"></span></div>
    <span class="x3"></span>
    <span class="ft">B</span><span class="ft fst-italic">I</span><span class="ft text-decoration-underline">U</span>
    <span class="ft gy">x<sup>2</sup></span><span class="ft gy">x<sub>2</sub></span><span class="ft gy">x<sup>2</sup></span><span class="ft gy">αβ</span><span class="ft gy fs-5">A</span><span class="ft gy">A</span>
    <span class="d-flex" data-i="alg dr x2 bar4 dr x4 acl dr x4"></span><span class="hd"><svg><use href="#chv"/></svg></span>
    <span class="x2"></span><span class="gp"></span><span class="x4"></span>
    <span class="d-flex" data-i="fil dr x4 pal dg x4 pn2 dr x4 blb x4"></span>
    <div class="fcb fc3 ps-1"><svg width="42" height="3"><path d="M0 1h42" stroke="#000"/></svg><span class="ddb"></span></div>
    <span class="x4"></span><span class="fcb">0.5</span>
  </div>
</div>

<div class="d-flex">
  <div class="dock d-flex">
    <div class="stabs">
      <div class="stab st1">プロジェクトエクスプローラ (8)</div>
      <div class="stab st2">メッセージログ</div>
      <div class="stab st3">スマートヒントログ</div>
    </div>
    <div class="vbars" id="vbars">
      <div class="vbar vb1"><div class="vgrip"></div><div data-v="ptr* zin zou crs tgt: mv1 ell: sct: dts bgt ano: arw: lin: rct: str: hnd sqr: gpc: hng bx3"></div><div class="vexp"></div></div>
      <div class="vbar vb2"><div class="vgrip"></div><div data-v="lns rng bxp bc rl clk ffd grd sqr"></div><div class="vexp"></div></div>
      <div class="vbar vb3"><div class="vgrip"></div><div data-v="mm xx"></div></div>
    </div>
  </div>
  <div class="mdi">
    <div class="wswin">
      <div class="wstit d-flex align-items-center">
        <svg class="bk" width="16" height="16" viewBox="0 0 16 16"><path d="M.5.500h15v15H.5z" fill="#e7e7da" stroke="#444"/><path d="M1 1h14v3H1z" fill="#c33"/><path d="M1 5h14v10H1z" fill="#a9cfa9"/><path d="M1 7.500h14M1 10.500h14M1 13h14M5.500 1v14M10.500 1v14" stroke="#234" stroke-width=".8"/></svg>
        Book1 - generation.html
      </div>
      <svg class="wc wc1" viewBox="0 0 20 14"><path d="M5 7h10" stroke="#000" stroke-width="1.200"/></svg>
      <svg class="wc wc2" viewBox="0 0 20 14"><path d="M6.500 3.500h7v7h-7z" fill="none" stroke="#000" stroke-width="1.200"/></svg>
      <svg class="wc wc3" viewBox="0 0 20 14"><path d="M5.500 2.500l9 9M14.500 2.500l-9 9" stroke="#000" stroke-width="1.200"/></svg>
      <div class="wsin">
        <table class="sht" id="sheet"></table>
        <div class="selv sv1"></div><div class="selv sv2"></div><div class="selv sv3"></div><div class="selv sv4"></div>
        <div class="vsb"><i></i></div>
        <div class="tabs d-flex align-items-start">
          <div class="tnav d-flex"><span>◂</span><span>▸</span><span>+</span><span>V</span></div>
          <svg width="8" height="16" viewBox="0 0 8 16"><path d="M1 0l6 16" stroke="#000"/></svg>
          <div class="tname">2024年までの台風の発生数_協定世界時基準_(csvフ</div>
          <svg width="8" height="16" viewBox="0 0 8 16"><path d="M7 0L1 16" stroke="#000"/></svg>
        </div>
      </div>
    </div>
  </div>
</div>

<div class="dlg">
  <div class="dlgt d-flex align-items-center">
    <svg class="di" width="14" height="14" viewBox="0 0 14 14"><path d="M.5.500h13v13H.500z" fill="#dde2e6" stroke="#777"/><path d="M2 3h5v9H2z" fill="#6d7f8d"/><path d="M8 3h4v4H8z" fill="#9fc0d8"/></svg>
    ヒートマップ: wheatmap
    <span class="q">?</span>
    <svg class="cl" width="13" height="13" viewBox="0 0 13 13"><path d="M1 1l11 11M12 1L1 12" stroke="#222"/></svg>
  </div>
  <div class="thm d-flex">
    <span class="lbt align-self-center">ダイアログ・テーマ</span>
    <div class="thmi"></div><div class="sbtn"></div>
  </div>
  <div class="dsc">条件フォーマットをワークシートのセルにヒートマップを使用して適用します</div>
  <div class="grp">
    <div class="r h21">
      <span class="b7 w57">範囲</span>
      <div class="fakei"><span class="hl">[Book1]"2024年までの台風の発生数_協定世界時基準_(csvブ"!2:13</span></div>
      <div class="sm19"><svg width="15" height="15"><use href="#imt"/></svg></div>
      <div class="sbtn sm20"></div>
    </div>
    <div class="r h20 m10">
      <span class="b7 w57">名前</span>
      <select class="form-select fw s94"><option>C2R1-C13R0</option></select>
    </div>
    <div class="r sect m4"><span class="mn"></span>レベル<hr></div>
    <div class="r h18 m1 ind">
      <span class="w89">自動再スケール</span>
      <span class="cb13"><svg width="11" height="11" viewBox="0 0 11 11"><path d="M2 5l3 4 5-8" fill="none" stroke="#444"/></svg></span>
    </div>
    <div class="r h18 m5 ind">
      <span class="w31 text-secondary">開始</span><input class="form-control i120" value="1" disabled>
      <span class="w31 g42 text-secondary">終了</span><input class="form-control i120" value="10" disabled>
      <button class="btn btnw b118 g51">最小／最大の検索</button>
    </div>
    <div class="r h20 m8 ind">
      <span class="w37">タイプ</span>
      <select class="form-select fsel s157"><option>線形</option></select>
    </div>
    <div class="r h20 m6 ind">
      <span class="w40">レベル</span>
      <select class="form-select fhov s111"><option>カウントによる</option></select>
      <input class="form-control i120 g42" value="20">
    </div>
    <div class="r h18 m6 ind">
      <span class="w60">第1レベル</span><input class="form-control i156">
    </div>
    <div class="r sect m4"><span class="mn"></span>色<hr></div>
    <div class="r h20 m2 ind">
      <span class="w97">フォーマットタイプ</span>
      <select class="form-select s130"><option>背景の塗りつぶし</option></select>
      <span class="w143 g41">テキスト色のコントラスト化</span><span class="cb13"></span>
    </div>
    <div class="r h20 m6 ind">
      <span class="w43">色生成</span>
      <select class="form-select s155"><option>3色制限付き混合</option></select>
    </div>
    <div class="r h23 m7 ind">
      <span class="w32">開始</span>
      <div class="cd c107"><span class="chip chip1"></span>#7575FF</div>
      <span class="w32 g42">中間</span>
      <div class="cd c108"><span class="chip chip2"></span>白</div>
      <span class="w33 g42">終了</span>
      <div class="cd c107"><span class="chip chip3"></span>#FF7575</div>
      <button class="btn btnw b46 g52">反転</button>
    </div>
    <div class="r h20 m7 ind">
      <span class="w67">中央の位置</span>
      <select class="form-select s148"><option>パーセンタイルによる</option></select>
      <input class="form-control i112 g42" value="50">
    </div>
    <div class="r h23 m7 ind">
      <span class="w20">下</span>
      <div class="cd c107"><span class="chip"></span>なし</div>
      <span class="w21 g43">上</span>
      <div class="cd c106"><span class="chip"></span>なし</div>
    </div>
  </div>
  <div class="foot d-flex justify-content-end">
    <button class="btn fb">適用</button><button class="btn fb pri">OK</button><button class="btn fb">キャンセル</button>
  </div>
  <svg class="curs" width="14" height="22" viewBox="0 0 14 22"><path d="M1 1v15l3.500-3 3 7 3-1-3-7h5z" fill="#1e9bb0" stroke="#0b4f5c"/></svg>
</div>

<script>
// toolbars from short id lists
document.querySelectorAll('[data-i]').forEach(function (el) {
    el.innerHTML = el.dataset.i.split(' ').map(function (t) {
        if (t === 'sp') return '<span class="sp"></span>';
        if (t === 'dr') return '<span class="dr"></span>';
        if (t === 'dg') return '<span class="dr dg"></span>';
        if (t === 'x2' || t === 'x4') return '<span class="' + t + '"></span>';
        return '<span class="tb"><svg width="20" height="20"><use href="#' + t + '"/></svg></span>';
    }).join('');
});
document.querySelectorAll('[data-v]').forEach(function (el) {
    el.innerHTML = el.dataset.v.split(' ').map(function (t) {
        var id = t.replace(/[*:]/, '');
        var ic = '<svg width="20" height="20"><use href="#' + id + '"/></svg>';
        if (t.endsWith('*')) ic = '<span class="vsel">' + ic + '</span>';
        return '<div class="vi">' + ic + (t.endsWith(':') ? '<span class="dr"></span>' : '') + '</div>';
    }).join('');
});

// worksheet
var cols = 'ABCDEFGHIJKLMN'.split('');
var data = [
    [1,2024,'F2 H2 I6 J8 K3 L4 M1 N26'],[2,2023,'E1 F1 G1 I2 J2 K3 M1 N17'],[3,2022,'E2 G2'],[4,2021,'C1 E1 F1 G2'],
    [6,2020,'F1 G1'],[7,2019,'B1 C1 G1'],[8,2018,'B1 C1 D1 G4'],[9,2017,'E1 G1'],[10,2016,''],
    [11,2015,'B1 C1 D2 E1 F2 G2'],[12,2014,'B2 C1 E2 G2'],[13,2013,'B1 C1 G4'],[14,2012,'D1 F1 G4'],[15,2011,'F2 G3'],
    [17,2010,'D1'],[18,2009,'F2 G2'],[19,2008,'E1 F4 G1'],[20,2007,'E1 F1'],[21,2006,'F1 G2'],[22,2005,'B1 D1 E1 F1'],
    [23,2004,'E1 F2 G5'],[24,2003,'B1 E1 F2 G2'],[25,2002,'B1 C1 F1 G3'],[26,2001,'F1 G2'],[28,2000,'F2'],
    [29,1999,'E2 G1'],[30,1998,''],[31,1997,'E2 F3 G3'],[32,1996,'C1 E1 F2'],[33,1995,'E1 G1']
];
var html = '<colgroup><col class="c0"><col class="c1"><col class="c2">' + '<col class="cn">'.repeat(12) + '</colgroup>';
html += '<thead><tr><th class="hg"></th><th class="hg"><span class="d-inline-flex align-items-center fnl"><svg width="10" height="10" class="mb-2" viewBox="0 0 10 10"><path d="M0 1h10L6 5v5H4V5z" fill="#109a20"/></svg>A(X)</span></th>';
cols.slice(1).forEach(function (c) {
    html += '<th class="' + (c === 'N' ? 'hg' : c === 'B' ? 'hb' : '') + '">' + c + '(Y)</th>';
});
html += '</tr></thead><tbody>';
function labelRow(name, cls, vals, fill) {
    var s = '<tr class="' + cls + '"><td class="rh lb">' + name + '</td>';
    cols.forEach(function (c, i) {
        var side = (c === 'A' || c === 'N');
        s += '<td class="' + (side ? 'ly' : 'lg') + ' ' + (fill ? (side ? 'fy' : 'fg') : '') + '">' + (vals ? vals(c, i) : '') + '</td>';
    });
    return s + '</tr>';
}
html += labelRow('ロングネーム', 'r14', function (c, i) { return c === 'A' ? '年' : c === 'N' ? '年間' : i + '月'; });
html += labelRow('単位', '');
html += labelRow('コメント', '');
html += labelRow('Source', '', function () { return '<span class="sgen">generatio</span>'; });
html += labelRow('F(x)=', '', null, true);
html += labelRow('フィルタ', 'r48', function (c) { return c === 'A' ? '<span class="ftr">1951</span><span class="ftr">1952</span><span class="ftr">1953</span><span class="ftr">1954</span>' : ''; });
data.forEach(function (r) {
    var vals = {};
    r[2].split(' ').forEach(function (v) { if (v) vals[v[0]] = v.slice(1); });
    html += '<tr class="' + ([6, 17, 28].includes(r[0]) ? 'hid' : '') + '"><td class="rh">' + r[0] + '</td><td class="aa">' + r[1] + '</td>';
    cols.slice(1).forEach(function (c) {
        html += '<td class="' + (c === 'N' ? 'nn' : 'yy') + '">' + (vals[c] || '') + '</td>';
    });
    html += '</tr>';
});
document.getElementById('sheet').innerHTML = html + '</tbody>';
</script>
</body>
</html>
